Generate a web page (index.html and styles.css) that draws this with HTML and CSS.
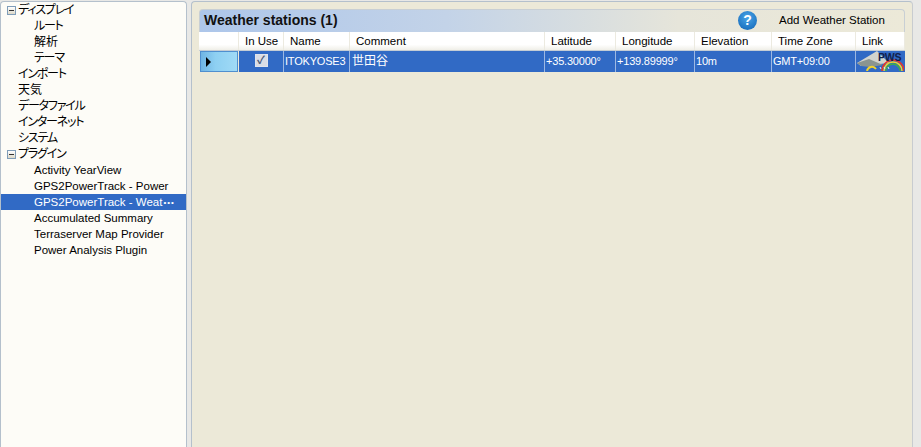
FILE: index.html
```html
<!DOCTYPE html>
<html lang="ja">
<head>
    <meta charset="UTF-8">
    <meta name="viewport" content="width=device-width, initial-scale=1.0">
    <title>Weather stations</title>
    <link rel="stylesheet" href="styles.css">
</head>
<body>
    <div class="app">
        <div class="tree">
            <div class="tree-row kana"><span class="expander"></span>ディスプレイ</div>
            <div class="tree-row child kana">ルート</div>
            <div class="tree-row child cjk">解析</div>
            <div class="tree-row child kana">テーマ</div>
            <div class="tree-row kana">インポート</div>
            <div class="tree-row cjk">天気</div>
            <div class="tree-row kana">データファイル</div>
            <div class="tree-row kana">インターネット</div>
            <div class="tree-row kana">システム</div>
            <div class="tree-row kana"><span class="expander"></span>プラグイン</div>
            <div class="tree-row child">Activity YearView</div>
            <div class="tree-row child">GPS2PowerTrack - Power</div>
            <div class="tree-row child selected">GPS2PowerTrack - Weat<span class="dots">•••</span></div>
            <div class="tree-row child">Accumulated Summary</div>
            <div class="tree-row child">Terraserver Map Provider</div>
            <div class="tree-row child">Power Analysis Plugin</div>
        </div>

        <div class="content">
            <div class="panel">
                <div class="panel-header">
                    <h1>Weather stations (1)</h1>
                    <span class="help">?</span>
                    <span class="add-button">Add Weather Station</span>
                </div>

                <div class="grid-row grid-head">
                    <div class="cell"></div>
                    <div class="cell">In Use</div>
                    <div class="cell">Name</div>
                    <div class="cell">Comment</div>
                    <div class="cell">Latitude</div>
                    <div class="cell">Longitude</div>
                    <div class="cell">Elevation</div>
                    <div class="cell">Time Zone</div>
                    <div class="cell">Link</div>
                </div>

                <div class="grid-row grid-data">
                    <div class="cell row-marker"><span class="arrow"></span></div>
                    <div class="cell center"><span class="check">✓</span></div>
                    <div class="cell">ITOKYOSE3</div>
                    <div class="cell cjk">世田谷</div>
                    <div class="cell">+35.30000°</div>
                    <div class="cell">+139.89999°</div>
                    <div class="cell">10m</div>
                    <div class="cell">GMT+09:00</div>
                    <div class="cell link-cell">
                        <svg class="pws" viewBox="0 0 48 20" width="48" height="20">
                            <polygon points="1,12 21,0 33,12 14,14 5,15" fill="#d2d4ce"/>
                            <polygon points="1,12 13,8 27,14 14,16 5,15" fill="#8b9590"/>
                            <path d="M26 20a11 11 0 0 1 22 0" fill="none" stroke="#e8332a" stroke-width="1.5"/>
                            <path d="M28 20a9 9 0 0 1 18 0" fill="none" stroke="#f3d22c" stroke-width="1.5"/>
                            <path d="M30 20a7 7 0 0 1 14 0" fill="none" stroke="#3fae49" stroke-width="1.5"/>
                            <path d="M11 20a5 5 0 0 1 9 -2" fill="none" stroke="#f3d22c" stroke-width="2"/>
                            <path d="M24 16l1 2M28 16l1 2M32 16l1 2" stroke="#e6ecf5" stroke-width="1"/>
                            <text x="22" y="10" class="pws-text">PWS</text>
                        </svg>
                    </div>
                </div>
            </div>
        </div>
    </div>
</body>
</html>
```

FILE: styles.css
```css
html, body {
    margin: 0;
    height: 100%;
    overflow: hidden;
}
body {
    font-family: "Liberation Sans", "Noto Sans CJK JP", sans-serif;
    font-size: 11.5px;
    color: #000;
    background-color: #e8e8e6;
}
.app {
    display: flex;
    height: 447px;
    box-sizing: border-box;
    padding: 1px 8px 0 0;
}
.tree {
    width: 187px;
    box-sizing: border-box;
    background-color: #fdfcf7;
    border: 1px solid #b4c0cc;
    border-bottom: none;
    border-radius: 4px 4px 0 0;
    flex-shrink: 0;
}
.tree-row {
    position: relative;
    height: 16px;
    line-height: 16px;
    padding-left: 17px;
    white-space: nowrap;
    font-size: 11.5px;
}
.tree-row.kana {
    font-size: 12px;
    font-feature-settings: "palt";
    letter-spacing: -1.2px;
}
.tree-row.cjk {
    font-size: 12px;
}
.tree-row.child {
    padding-left: 33px;
}
.tree-row.selected {
    background-color: #316ac5;
    color: #fff;
}
.dots {
    font-size: 8px;
    letter-spacing: 1px;
    margin-left: 1px;
    vertical-align: 1px;
}
.expander {
    position: absolute;
    left: 6px;
    top: 4px;
    width: 7px;
    height: 7px;
    border: 1px solid #7f9db9;
    background: linear-gradient(#ffffff, #dcd8c8);
}
.expander::after {
    content: "";
    position: absolute;
    left: 1px;
    top: 3px;
    width: 5px;
    height: 1px;
    background-color: #333;
}
.content {
    flex: 1;
    margin-left: 4px;
    box-sizing: border-box;
    background-color: #ece9d8;
    border: 1px solid #b4c0cc;
    border-right-color: #c8ccd0;
    border-bottom: none;
    border-radius: 4px 4px 0 0;
    padding: 7px 0 0 7px;
}
.panel {
    width: 706px;
}
.panel-header {
    display: flex;
    align-items: center;
    height: 23px;
    box-sizing: border-box;
    background: linear-gradient(90deg, #adc6ea 0%, #c3d3e8 35%, #e6e5da 68%, #ece9d8 100%);
    border: 1px solid #c8cfd4;
    border-bottom: none;
    border-radius: 4px 4px 0 0;
    padding: 0 0 2px 4px;
}
.panel-header h1 {
    margin: 0;
    font-size: 14px;
    font-weight: bold;
    color: #111;
    flex: 1;
}
.help {
    width: 19px;
    height: 19px;
    border-radius: 50%;
    background: radial-gradient(circle at 50% 35%, #4aa6e8, #0f62b4);
    color: #fff;
    font-weight: bold;
    font-size: 14px;
    line-height: 19px;
    text-align: center;
    margin-right: 22px;
}
.add-button {
    width: 125px;
    text-align: left;
}
.grid-row {
    display: grid;
    grid-template-columns: 40px 45px 66px 195px 71px 79px 77px 84px 49px;
}
.grid-head {
    height: 19px;
    box-sizing: border-box;
    border-bottom: 1px solid #c5cdd5;
    background: linear-gradient(#ffffff 70%, #f0efe8);
}
.grid-head .cell {
    line-height: 18px;
    padding-left: 6px;
    border-right: 1px solid #eceae0;
}
.grid-data {
    height: 21px;
    color: #fff;
    font-size: 11px;
}
.cell {
    box-sizing: border-box;
    white-space: nowrap;
    overflow: hidden;
}
.grid-data .cell {
    background-color: #316ac5;
    line-height: 20px;
    padding-left: 1px;
    border-right: 1px solid #9db8e2;
    letter-spacing: -0.2px;
}
.grid-data .cell.cjk {
    font-size: 12px;
    padding-left: 2px;
    letter-spacing: 0;
}
.grid-data .cell.center {
    text-align: center;
    padding-left: 0;
}
.grid-data .row-marker {
    background: linear-gradient(90deg, #6fb4e4, #8ed0f2 40%, #a0daf6);
    border: 1px solid #4f8fcf;
    margin: 0 1px 0 1px;
    display: flex;
    align-items: center;
    padding-left: 5px;
}
.arrow {
    width: 0;
    height: 0;
    border-left: 5px solid #000;
    border-top: 5px solid transparent;
    border-bottom: 5px solid transparent;
}
.check {
    display: inline-block;
    width: 11px;
    height: 11px;
    line-height: 11px;
    border: 1px solid #e0e4ec;
    background-color: #d9dde6;
    color: #4a5a78;
    font-size: 11px;
    font-weight: bold;
    text-align: center;
    vertical-align: 1px;
}
.grid-data .link-cell {
    padding: 0;
    border-right: none;
}
.pws {
    display: block;
}
.pws-text {
    font-family: "Liberation Sans", sans-serif;
    font-size: 10.5px;
    font-weight: bold;
    fill: #11204a;
}
```
